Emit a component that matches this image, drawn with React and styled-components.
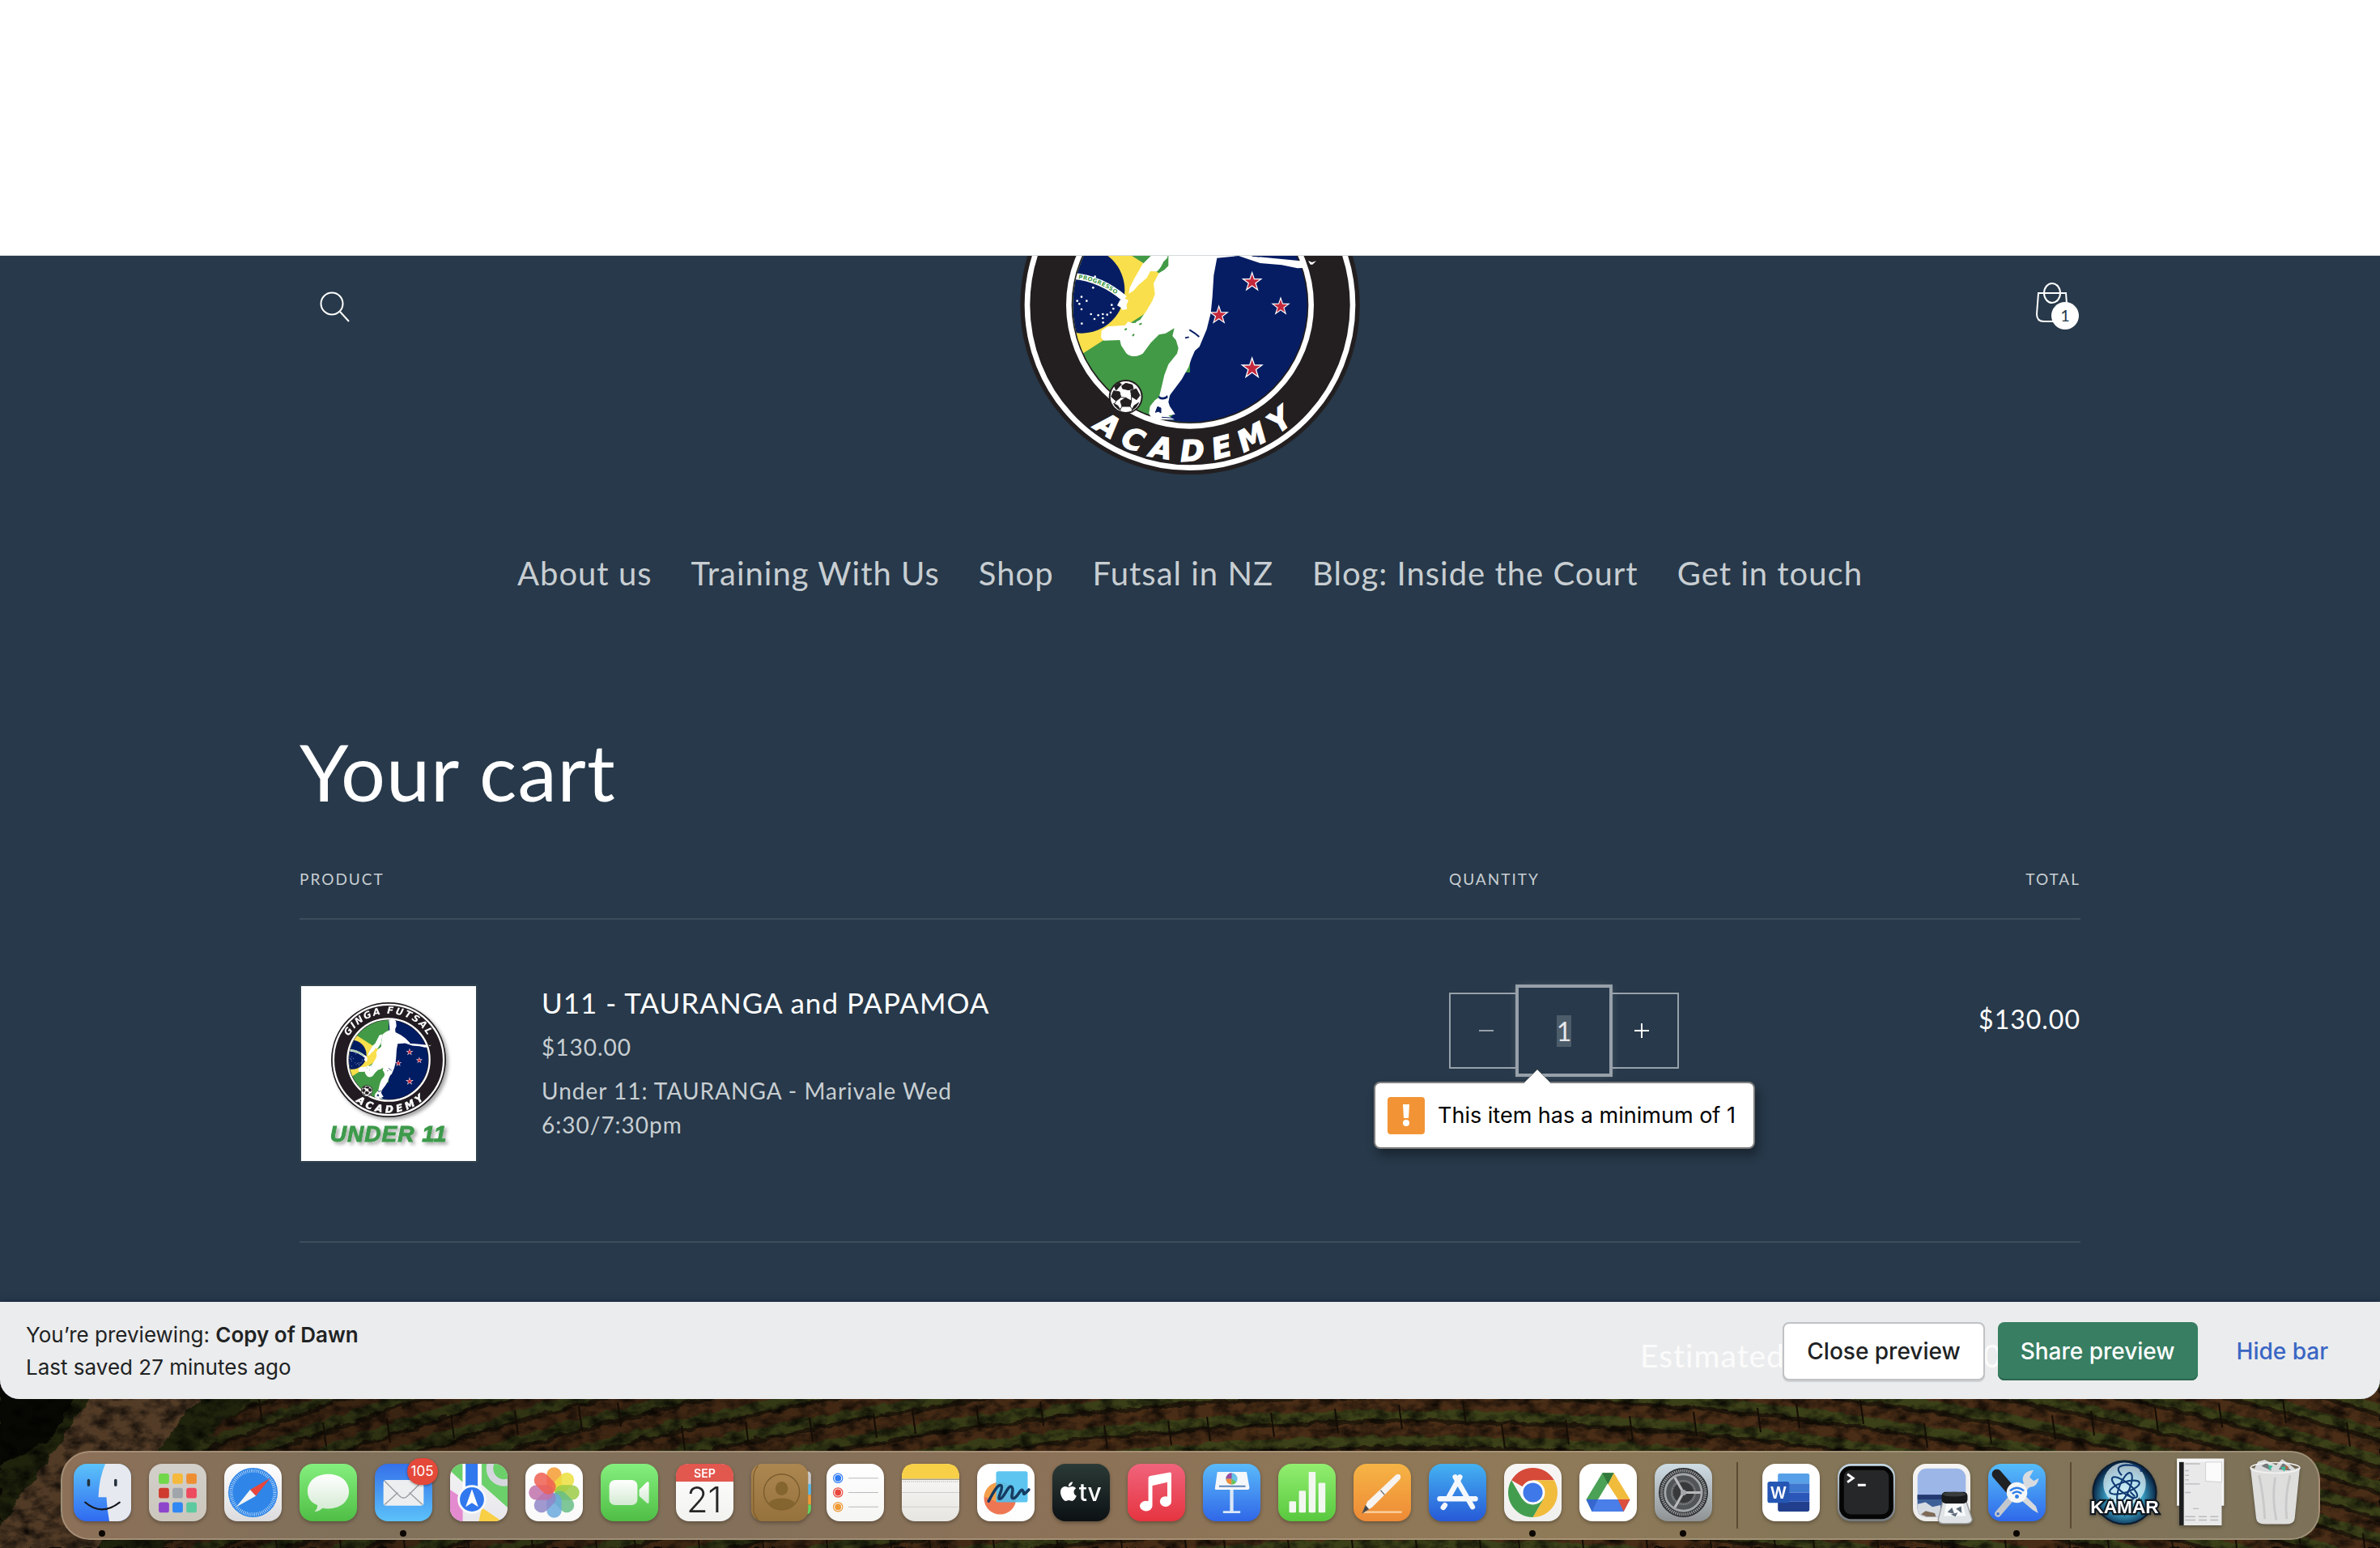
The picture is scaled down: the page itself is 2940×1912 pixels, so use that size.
import { useEffect, useRef } from "react";
import styled, { createGlobalStyle } from "styled-components";
import { FaApple } from "react-icons/fa";

const COLORS = {
  store: "#27394a",
  storeText: "#c8ced2",
  line: "rgba(255, 255, 255, 0.1)",
  control: "#97a1aa",
  bar: "rgba(251, 251, 251, 0.926)",
  ink: "#202223",
  green: "#377e62",
  link: "#3a66c4",
};

const GlobalStyle = createGlobalStyle`
  * {
    box-sizing: border-box;
  }
  body {
    margin: 0;
    background: #1c1208;
  }
  h1, h2, p {
    margin: 0;
    font-weight: 400;
  }
`;

const Desktop = styled.div`
  display: flex;
  flex-direction: column;
  min-height: 100vh;
  background: #150e06;
`;

const BrowserWindow = styled.div`
  position: relative;
  z-index: 1;
  display: flex;
  flex-direction: column;
  flex: 1;
  overflow: hidden;
  border-radius: 0 0 24px 24px;
  background: white;
`;

const BlankArea = styled.div`
  height: 316px;
  flex: none;
  border-bottom: 1px solid #d5dadc;
`;

const Store = styled.main`
  flex: 1;
  background: ${COLORS.store};
  color: white;
  font-family: Lato, "Liberation Sans", sans-serif;
  letter-spacing: 1px;
`;

const PageWidth = styled.div`
  max-width: 2400px;
  margin: 0 auto;
  padding: 0 100px;
`;

const Header = styled.header`
  display: grid;
  grid-template-columns: 1fr auto 1fr;
  align-items: start;
`;

const IconButton = styled.button`
  position: relative;
  display: flex;
  justify-self: ${(props) => props.$side};
  align-items: center;
  justify-content: center;
  width: 88px;
  height: 88px;
  margin: 19px -10px 0 0;
  padding: 0;
  border: 0;
  background: none;
  color: white;
`;

const CartCount = styled.span`
  position: absolute;
  left: 42px;
  top: 38px;
  width: 34px;
  height: 34px;
  border-radius: 50%;
  background: white;
  color: ${COLORS.store};
  font: 20px/32px Lato, sans-serif;
  text-align: center;
`;

const Nav = styled.nav`
  display: flex;
  justify-content: center;
  gap: 48px;
  margin-top: 92px;
  a {
    color: ${COLORS.storeText};
    font-size: 40px;
    line-height: 60px;
    text-decoration: none;
  }
`;

const Title = styled.h1`
  margin-top: 155px;
  font-size: 97px;
  line-height: 120px;
`;

const CartTable = styled.table`
  width: 100%;
  margin-top: 55px;
  border-collapse: separate;
  border-spacing: 0;
  table-layout: fixed;
  th {
    padding: 0 0 30px;
    border-bottom: 2px solid ${COLORS.line};
    color: ${COLORS.storeText};
    font-size: 19px;
    font-weight: 400;
    line-height: 36px;
    letter-spacing: 2px;
    text-align: left;
    text-transform: uppercase;
  }
  td {
    padding: 80px 0 97px;
    border-bottom: 2px solid ${COLORS.line};
    vertical-align: top;
  }
  th:last-child,
  td:last-child {
    text-align: right;
  }
`;

const Thumb = styled.div`
  height: 220px;
  border: 2px solid #31424f;
  background: white;
  svg {
    display: block;
  }
`;

const Details = styled.div`
  max-width: 640px;
  padding-left: 79px;
  color: ${COLORS.storeText};
  font-size: 28px;
  line-height: 42px;
  p {
    margin-top: 12px;
  }
  a {
    display: block;
    color: white;
    font-size: 35px;
    line-height: 44px;
    white-space: nowrap;
    text-decoration: none;
  }
`;

const QuantityWrap = styled.div`
  position: relative;
  width: 284px;
  margin-top: 10px;
`;

const Quantity = styled.div`
  display: flex;
  height: 94px;
  border: 2px solid ${COLORS.control};
  button {
    display: flex;
    align-items: center;
    justify-content: center;
    width: 88px;
    padding: 0;
    border: 0;
    background: none;
    color: white;
  }
  button:disabled {
    color: ${COLORS.control};
  }
  input {
    position: relative;
    flex: 1;
    min-width: 0;
    margin: -4px 0;
    padding: 0;
    border: 0;
    outline: 4px solid ${COLORS.control};
    outline-offset: 4px;
    box-shadow: 0 0 0 4px ${COLORS.store}, 0 0 10px 6px rgba(255, 255, 255, 0.2);
    background: ${COLORS.store};
    color: #e4e7ea;
    font: 32px Lato, sans-serif;
    text-align: center;
    appearance: none;
  }
  input::selection {
    background: #4d5c69;
    color: #e4e7ea;
  }
`;

const Tooltip = styled.div`
  position: absolute;
  top: 110px;
  left: -93px;
  z-index: 2;
  display: flex;
  align-items: center;
  gap: 16px;
  height: 83px;
  padding: 0 22px 0 15px;
  border: 2px solid #7d7d7d;
  border-radius: 8px;
  background: white;
  box-shadow: 4px 8px 12px rgba(0, 0, 0, 0.35);
  color: black;
  font: 27px/40px Inter, sans-serif;
  letter-spacing: 0;
  white-space: nowrap;
`;

const TooltipArrow = styled.svg`
  position: absolute;
  top: -18px;
  left: 182px;
`;

const TotalPrice = styled.div`
  margin-top: 18px;
  font-size: 32px;
  line-height: 50px;
`;

const Estimate = styled.div`
  display: flex;
  justify-content: flex-end;
  gap: 22px;
  margin-top: 112px;
  font-size: 39px;
  line-height: 54px;
  h2 {
    font-size: 39px;
  }
`;

const PreviewBar = styled.footer`
  position: absolute;
  right: 0;
  bottom: 0;
  left: 0;
  z-index: 3;
  display: flex;
  align-items: center;
  justify-content: space-between;
  height: 120px;
  padding: 2px 32px 0;
  background: ${COLORS.bar};
  box-shadow: 0 0 8px rgba(20, 20, 60, 0.6);
  color: ${COLORS.ink};
  font: 26px/40px Inter, sans-serif;
  b {
    font-weight: 600;
  }
`;

const BarActions = styled.div`
  display: flex;
  gap: 16px;
`;

const BarButton = styled.button`
  height: 72px;
  padding: 0 ${(props) => (props.$kind === "plain" ? 32 : 28)}px;
  border: ${(props) => (props.$kind === "outline" ? "2px solid #bfc2c5" : "0")};
  border-radius: 8px;
  background: ${(props) =>
    ({ outline: "white", primary: COLORS.green, plain: "none" })[props.$kind]};
  box-shadow: ${(props) =>
    ({
      outline: "0 2px 1px rgba(0, 0, 0, 0.12)",
      primary: "inset 0 -2px 0 #2b664f",
      plain: "none",
    })[props.$kind]};
  color: ${(props) =>
    ({ outline: COLORS.ink, primary: "white", plain: COLORS.link })[props.$kind]};
  font: 500 28px/40px Inter, sans-serif;
`;

const DockArea = styled.div`
  position: relative;
  display: flex;
  flex: none;
  justify-content: center;
  align-items: flex-start;
  height: 184px;
  padding-top: 64px;
`;

const Wallpaper = styled.svg`
  position: absolute;
  right: 0;
  bottom: 0;
  width: 100%;
  height: 212px;
`;

const Dock = styled.div`
  position: relative;
  display: flex;
  height: 110px;
  padding: 0 7px 0 3px;
  border: 2px solid rgba(225, 210, 185, 0.3);
  border-radius: 36px;
  background: linear-gradient(90deg, #8d7058, #80705a 12%, #84705a 30%, #8c7257 45%, #8f7a58 66%, #847558 78%, #7d7259);
`;

const DockItem = styled.div`
  position: relative;
  width: 93px;
  display: flex;
  flex-direction: column;
  align-items: center;
  padding-top: 14px;
  > svg {
    overflow: visible;
    filter: drop-shadow(0 2px 2px rgba(0, 0, 0, 0.3));
  }
`;

const RunningDot = styled.span`
  width: 8px;
  height: 8px;
  margin-top: 11px;
  border-radius: 50%;
  background: #0b0500;
`;

const DockBadge = styled.span`
  position: absolute;
  top: 7px;
  left: 51px;
  width: 38px;
  height: 33px;
  border-radius: 17px;
  background: #e5493a;
  box-shadow: 0 1px 3px rgba(0, 0, 0, 0.4);
  color: white;
  font: 17px/33px Inter, sans-serif;
  text-align: center;
`;

const DockDivider = styled.span`
  width: 2px;
  height: 82px;
  margin: 12px 19px 0;
  background: #5c4a32;
`;

const starPoints = (cx, cy, r) =>
  Array.from({ length: 10 }, (_, i) => {
    const radius = i % 2 ? r * 0.39 : r;
    const a = (i * Math.PI) / 5 - Math.PI / 2;
    return `${(cx + radius * Math.cos(a)).toFixed(1)},${(cy + radius * Math.sin(a)).toFixed(1)}`;
  }).join(" ");

const NZ_STARS = [
  [950, 145, 41],
  [827, 268, 39],
  [1056, 236, 37],
  [950, 465, 45],
];

const BRAZIL_STARS = [
  [318, 200], [302, 215], [337, 215], [310, 226], [318, 246], [368, 125], [361, 166],
  [353, 264], [380, 268], [397, 264], [413, 266], [426, 258], [436, 244], [430, 230],
  [366, 282], [397, 279], [398, 295], [319, 299],
];

// full adds the club name round the top, which the scrolled header never shows
const ClubBadge = ({ id, full, ...props }) => (
  <svg {...props} role="img" aria-label="Ginga Futsal Academy">
    <defs>
      <clipPath id={`${id}-face`}>
        <circle cx="720" cy="230" r="434" />
      </clipPath>
      <path id={`${id}-bottom`} d="M142 230A578 578 0 0 0 1298 230" />
      <path id={`${id}-top`} d="M214 230A506 506 0 0 1 1226 230" />
      <path id={`${id}-band`} d="M306 133Q390 142 466 207" />
    </defs>
    <circle cx="720" cy="230" r="629" fill="#231f20" />
    <circle cx="720" cy="230" r="603" fill="none" stroke="white" strokeWidth="20" />
    <circle cx="720" cy="230" r="449" fill="none" stroke="white" strokeWidth="20" />
    <g clipPath={`url(#${id}-face)`}>
      <rect x="280" y="-210" width="450" height="890" fill="#439a46" />
      <rect x="720" y="-210" width="450" height="890" fill="#061d63" />
      <path d="M680 480L636 590L655 640L600 680H740V480z" fill="#061d63" />
      <path d="M696 170L320 412L-56 170L320 -70z" fill="#f9df4b" />
      <circle cx="318" cy="175" r="160" fill="#061d63" />
      <path d="M280 122Q390 130 478 207" fill="none" stroke="white" strokeWidth="24" />
      <text fill="#439a46" fontFamily="DejaVu Sans" fontWeight="700" fontSize="21">
        <textPath href={`#${id}-band`}>PROGRESSO</textPath>
      </text>
      {BRAZIL_STARS.map(([x, y]) => (
        <circle key={`${x}-${y}`} cx={x} cy={y} r="4" fill="white" />
      ))}
      {NZ_STARS.map(([x, y, r]) => (
        <g key={`${x}-${y}`}>
          <polygon points={starPoints(x, y, r)} fill="white" />
          <polygon points={starPoints(x, y, r * 0.72)} fill="#c5283d" />
        </g>
      ))}
    </g>
    <g fill="white">
      <path d="M722-205Q765-225 800-195L806-140L792-105L796-72L856-40L905-4L960 50L1060 60L1145 68L1152 92L1118 94L1060 82L980 75L935 60L900 48L820 56L808 120L803 200L797 260L782 320L755 385L738 400L725 430L715 460L690 505L645 565L640 590L645 605L665 635L640 640L662 655H600L575 645L568 632L572 605L590 583L605 572L612 545L625 490L640 450L672 410L677 390L668 360L655 345L662 316L630 335L605 340L575 370L545 410Q510 430 485 410L465 380L460 360L400 362L390 350L392 325L415 310L480 305L490 292L510 298L535 285L560 250L580 215L590 190L585 150L605 112L625 100L640 85L640 48L655-50L690-75L732-95L730-130z" />
      <path d="M575 48L620-40L655-50L637 48L635 65L598 106L573 105L560 130L530 155L510 178L493 188L497 165L515 130L545 78z" />
      <path d="M450 232L460 212L478 206L492 212L485 230L487 245L470 249L464 240z" />
      <path d="M1158 66L1172 72L1188 67L1174 80H1166z" />
    </g>
    <path d="M640 52L634 82L600 112L622 70z" fill="#439a46" />
    <path d="M718 322Q740 335 754 348" stroke="#061d63" strokeWidth="6" fill="none" />
    <path d="M702 352L716 349M950 48L978 50" stroke="#061d63" strokeWidth="5" />
    <path d="M478 322L486 318M507 345L513 338M515 296L519 290M532 303L541 298" stroke="#439a46" strokeWidth="6" />
    <path d="M604 566Q622 580 636 564L638 574Q620 586 604 576z" fill="#061d63" />
    <path d="M592 628L600 607L612 612V630L603 624zM615 646L660 649" fill="#061d63" stroke="#061d63" strokeWidth="3" />
    <circle cx="482" cy="570" r="63" fill="#231f20" />
    <circle cx="482" cy="570" r="57" fill="white" />
    <g fill="#231f20" stroke="#231f20" strokeWidth="3">
      <path d="M482 574L503 586L498 606H468L462 586z" />
      <path d="M437 548L459 552L464 572L446 586L428 570z" />
      <path d="M500 547L521 541L534 565L522 581L503 569z" />
      <path d="M467 530L482 520L506 526L510 540L492 545L470 540z" />
      <path d="M440 531L458 518L466 524L446 546zM437 595L452 603L463 620Q444 612 437 595zM513 603L530 592Q522 612 504 620z" />
      <path d="M446 586L440 596M468 606L462 616M498 606L506 616M503 586L503 569M464 572L482 574" />
    </g>
    <g fill="white" fontFamily="DejaVu Sans" fontWeight="700" fontStyle="italic" textAnchor="middle">
      <text fontSize="108" letterSpacing="36" stroke="white" strokeWidth="4">
        <textPath href={`#${id}-bottom`} startOffset="52%">ACADEMY</textPath>
      </text>
      {full && (
        <text fontSize="104" letterSpacing="16">
          <textPath href={`#${id}-top`} startOffset="50%">GINGA FUTSAL</textPath>
        </text>
      )}
    </g>
  </svg>
);

const AppTile = ({ id, from, to, children }) => (
  <svg width="71" height="71" viewBox="0 0 100 100" aria-hidden="true">
    <defs>
      <linearGradient id={`${id}-fill`} x2="0" y2="1">
        <stop stopColor={from} />
        <stop offset="1" stopColor={to} />
      </linearGradient>
      <linearGradient id={`${id}-shine`} x2="0" y2="1">
        <stop stopColor="#ffffff" />
        <stop offset="1" stopColor="#d3ead2" />
      </linearGradient>
      <clipPath id={`${id}-clip`}>
        <rect width="100" height="100" rx="23" />
      </clipPath>
    </defs>
    <rect width="100" height="100" rx="23" fill={`url(#${id}-fill)`} />
    {children}
  </svg>
);

const Finder = () => (
  <AppTile id="finder" from="#5cc3fa" to="#2f6af0">
    <g clipPath="url(#finder-clip)">
      <path d="M55 0H100V100H62Q58 78 57 58H43Q44 26 55 0z" fill="#e6e9f0" />
      <path d="M26 29V37M73 29V37" stroke="#24303c" strokeWidth="5" strokeLinecap="round" />
      <path d="M20 67Q48 92 80 67" fill="none" stroke="#15181c" strokeWidth="3" strokeLinecap="round" />
    </g>
  </AppTile>
);

const LAUNCH_COLORS = [
  "#72d84b", "#f5b93b", "#ee8e33", "#cf3a2e", "#9fa5aa", "#ee4a5f", "#8f44cc", "#3187f3", "#5cc9a0",
];

const Launchpad = () => (
  <AppTile id="launchpad" from="#d3cfca" to="#cbc7bd">
    {LAUNCH_COLORS.map((color, i) => (
      <rect
        key={color}
        x={17 + (i % 3) * 24}
        y={17 + Math.floor(i / 3) * 25}
        width="18"
        height="18"
        rx="4"
        fill={color}
      />
    ))}
  </AppTile>
);

const Safari = () => (
  <AppTile id="safari" from="#ffffff" to="#dcdcde">
    <circle cx="50" cy="50" r="43" fill="#2f86e8" />
    <circle cx="50" cy="50" r="38" fill="none" stroke="#d4e6fb" strokeWidth="6" strokeDasharray="1 2.3" />
    <path d="M80 25L55 56L45 45z" fill="#e8463c" />
    <path d="M21 75L55 56L45 45z" fill="#f2f4f6" />
  </AppTile>
);

const Messages = () => (
  <AppTile id="messages" from="#85ef7e" to="#4fbe45">
    <path d="M50 18C72 18 86 31 86 48S72 78 50 78Q45 78 40 77Q34 83 26 83Q32 78 31 72C20 68 14 59 14 48C14 31 28 18 50 18z" fill="url(#messages-shine)" />
  </AppTile>
);

const Mail = () => (
  <AppTile id="mail" from="#3470ea" to="#5cc2fa">
    <rect x="15" y="28" width="70" height="45" rx="5" fill="#eceef0" />
    <path d="M17 71L40 50M83 71L60 50M17 30L43 56Q50 63 57 56L83 30" fill="none" stroke="#999da1" strokeWidth="2" />
  </AppTile>
);

const Maps = () => (
  <AppTile id="maps" from="#f3f3f5" to="#e8e8ec">
    <g clipPath="url(#maps-clip)">
      <path d="M0 0H22V32L0 12zM55 0H100V76L55 36z" fill="#6bd06a" />
      <circle cx="94" cy="8" r="25" fill="none" stroke="#d5d7de" strokeWidth="12" />
      <path d="M0 45L22 60V100H0z" fill="#e48bd0" />
      <path d="M55 76L90 100H50z" fill="#f8cf45" />
      <path d="M27 0H48V50H27z" fill="#3178ef" />
      <path d="M24 0V45M51 0V40" stroke="white" strokeWidth="4" />
      <circle cx="38" cy="62" r="25" fill="#f7f8fa" />
      <circle cx="38" cy="62" r="21" fill="#3178ef" />
      <path d="M38 44L49 75L38 68L27 75z" fill="white" />
    </g>
  </AppTile>
);

const PETALS = ["#f59c31", "#ebdf3d", "#9ccb45", "#68bd86", "#6ca9dd", "#8f87c8", "#c072ab", "#ef5f51"];

const Photos = () => (
  <AppTile id="photos" from="#ffffff" to="#f9f9f9">
    {PETALS.map((color, i) => (
      <rect key={color} x="37" y="6" width="26" height="43" rx="13" fill={color} fillOpacity="0.85" transform={`rotate(${i * 45} 50 50)`} />
    ))}
  </AppTile>
);

const FaceTime = () => (
  <AppTile id="facetime" from="#85ef7e" to="#4fbe45">
    <rect x="15" y="28" width="49" height="44" rx="10" fill="url(#facetime-shine)" />
    <path d="M67 45L80 32Q84 30 84 34V66Q84 71 80 68L67 56z" fill="url(#facetime-shine)" />
  </AppTile>
);

const Calendar = () => (
  <AppTile id="calendar" from="#ffffff" to="#f2f2ef">
    <path d="M0 31V23Q0 0 23 0H77Q100 0 100 23V31z" fill="#e2574e" />
    <text x="50" y="24" fill="white" fontFamily="Inter" fontWeight="600" fontSize="20" textAnchor="middle">SEP</text>
    <text x="49" y="85" fill="#262626" fontFamily="Inter" fontWeight="300" fontSize="61" textAnchor="middle">21</text>
  </AppTile>
);

const Contacts = () => (
  <AppTile id="contacts" from="#ad8750" to="#95713c">
    <path d="M98 13Q104 14 104 20V36H96z" fill="#c9c9c9" />
    <path d="M96 35H104V54H96z" fill="#58b8ea" />
    <path d="M96 54H104V71H96z" fill="#f39a34" />
    <path d="M96 71H104V78Q104 87 96 88z" fill="#5fd45f" />
    <rect width="99" height="100" rx="20" fill="url(#contacts-fill)" />
    <path d="M12 3Q4 12 4 24V76Q4 90 12 97" stroke="#80602f" strokeWidth="2" fill="none" />
    <circle cx="53" cy="49" r="31" fill="none" stroke="#7b5c2e" strokeWidth="2" />
    <ellipse cx="53" cy="43" rx="11" ry="12" fill="#84642f" />
    <path d="M29 69Q38 60 53 60T77 69Q68 80 53 80T29 69z" fill="#84642f" />
  </AppTile>
);

const Reminders = () => (
  <AppTile id="reminders" from="#ffffff" to="#f5f5f3">
    {["#2f7cf6", "#e9453a", "#ee9a35"].map((color, i) => (
      <g key={color}>
        <circle cx="20" cy={25 + i * 25} r="8" fill="none" stroke={color} strokeWidth="1.6" />
        <circle cx="20" cy={25 + i * 25} r="5.5" fill={color} />
        <path d={`M38 ${25 + i * 25}H90`} stroke="#b9babb" strokeWidth="1.6" />
      </g>
    ))}
  </AppTile>
);

const Notes = () => (
  <AppTile id="notes" from="#fbfbfa" to="#e6e5e1">
    <path d="M0 26V23Q0 0 23 0H77Q100 0 100 23V26z" fill="#f8d048" />
    <path d="M0 27H100" stroke="#a9a189" strokeWidth="2" />
    <path d="M2 31H98" stroke="#bcbcb9" strokeWidth="2" strokeDasharray="1.5 2" />
    <path d="M0 50H100M0 75H100" stroke="#cfceca" strokeWidth="1.5" />
  </AppTile>
);

const Freeform = () => (
  <AppTile id="freeform" from="#ffffff" to="#fdfdfd">
    <circle cx="40" cy="60" r="28" fill="#ef7652" />
    <path d="M12 57A28 28 0 0 1 66 50L34 66z" fill="#f3a04a" />
    <rect x="33" y="13" width="55" height="54" rx="4" fill="#4cbff0" fillOpacity="0.9" />
    <path d="M20 65C29 48 37 34 42 38S33 62 40 61S54 36 60 40S56 60 63 60S75 43 79 46S77 59 90 45" fill="none" stroke="#163b62" strokeWidth="5" strokeLinecap="round" />
  </AppTile>
);

const AppleTv = () => (
  <AppTile id="tv" from="#2b3a36" to="#0c1114">
    <FaApple x="9" y="29" size="38" color="white" />
    <text x="46" y="65" fill="white" fontFamily="Inter" fontWeight="500" fontSize="42">tv</text>
  </AppTile>
);

const Music = () => (
  <AppTile id="music" from="#f0647c" to="#e63440">
    <path d="M36 25Q36 22 39 21L72 15Q76 14 76 18V65A10 9 0 1 1 69 57V32L43 38V73A11 9 0 1 1 36 65z" fill="white" />
  </AppTile>
);

const Keynote = () => (
  <AppTile id="keynote" from="#5abafa" to="#3067e8">
    <path d="M47 45H53V82H65V86H35V82H47z" fill="#dce8f7" />
    <path d="M25 14H76L81 42Q81 45 78 45H23Q20 45 21 42z" fill="#f5f7fa" />
    <path d="M28 39H74" stroke="#5b85b8" strokeWidth="3" />
    <circle cx="50" cy="26" r="10" fill="#68c2e7" />
    <path d="M50 26V16A10 10 0 0 0 40 26z" fill="#9c4ba0" />
    <path d="M50 26H40A10 10 0 0 0 50 36z" fill="#f28b3a" />
    <path d="M50 26V36A10 10 0 0 0 58 32z" fill="#6bc355" />
  </AppTile>
);

const Numbers = () => (
  <AppTile id="numbers" from="#92ee70" to="#58c83e">
    {[20, 38, 71, 52].map((h, i) => (
      <rect key={h} x={19 + i * 17} y={85 - h} width="12" height={h} rx="2" fill="#f2f8f0" />
    ))}
  </AppTile>
);

const Pages = () => (
  <AppTile id="pages" from="#f6b445" to="#ee8a36">
    <path d="M17 84H84" stroke="#fbd5a6" strokeWidth="3" />
    <path d="M16 85L24 66L74 19Q80 16 82 21Q83 25 79 29L32 76z" fill="#f6f3f1" />
    <path d="M47 46L54 54M16 85L21 73L26 79z" stroke="#555" fill="#444" strokeWidth="1.5" />
  </AppTile>
);

const AppStore = () => (
  <AppTile id="appstore" from="#44b2f2" to="#2759d7">
    <g stroke="#f4f8fd" strokeWidth="9" strokeLinecap="round">
      <path d="M54 23L33 61H19M33 61H81M46 23L76 75M28 72L25 76" fill="none" />
    </g>
  </AppTile>
);

const Chrome = () => (
  <AppTile id="chrome" from="#f8f6f5" to="#efefee">
    <path d="M50 50L12.8 28.5A43 43 0 0 1 87.2 28.5H50z" fill="#d64a3a" />
    <path d="M50 28.5H87.2A43 43 0 0 1 50 93L68.6 60.8z" fill="#f1bb3c" />
    <path d="M31.4 60.8L12.8 28.5A43 43 0 0 0 50 93L68.6 60.8z" fill="#439d4f" />
    <circle cx="50" cy="50" r="21" fill="white" />
    <circle cx="50" cy="50" r="17" fill="#3f78e8" />
  </AppTile>
);

const Drive = () => (
  <AppTile id="drive" from="#ffffff" to="#ffffff">
    <path d="M40 16H60L32 63L22 83L12 62z" fill="#4ba155" />
    <path d="M40 16H60L50 36z" fill="#31793b" />
    <path d="M60 16L88 62H67L50 36z" fill="#f1bb3c" />
    <path d="M12 62H88L77 83H22z" fill="#4a7ee8" />
    <path d="M67 62H88L77 83z" fill="#dd4f3e" />
    <path d="M12 62H32L22 83z" fill="#3567cf" />
    <path d="M50 36L67 62H33z" fill="white" />
  </AppTile>
);

const Settings = () => (
  <AppTile id="settings" from="#cfdde5" to="#8f9294">
    <circle cx="50" cy="50" r="43" fill="#2f3133" />
    <circle cx="50" cy="50" r="38" fill="none" stroke="#9b9ea0" strokeWidth="5" strokeDasharray="2 1.6" />
    <circle cx="50" cy="50" r="32" fill="#525557" stroke="#a4a7a9" strokeWidth="4" />
    <circle cx="50" cy="50" r="20" fill="#37393b" stroke="#7e8183" strokeWidth="4" strokeDasharray="2 1" />
    <path d="M50 50H80M50 50L35 24M50 50L35 76" stroke="#b8babc" strokeWidth="4.5" />
    <circle cx="50" cy="50" r="5" fill="#a4a7a9" />
  </AppTile>
);

const Word = () => (
  <AppTile id="word" from="#ffffff" to="#ffffff">
    <path d="M27 34V20Q27 17 30 17H79Q82 17 82 20V34z" fill="#57a0e8" />
    <path d="M27 34H82V50H27z" fill="#3f79cf" />
    <path d="M27 50H82V66H27z" fill="#2b57b8" />
    <path d="M27 66H82V80Q82 83 79 83H30Q27 83 27 80z" fill="#213f8c" />
    <rect x="9" y="31" width="38" height="37" rx="4" fill="#2556b4" />
    <text x="28" y="60" fill="white" fontFamily="Inter" fontWeight="600" fontSize="28" textAnchor="middle">W</text>
  </AppTile>
);

const Terminal = () => (
  <AppTile id="terminal" from="#c5d9e6" to="#74787b">
    <rect x="3" y="4" width="94" height="92" rx="20" fill="#050505" />
    <rect x="11" y="11" width="78" height="77" rx="12" fill="#262728" />
    <path d="M17 18L27 25L17 32M35 37H49" fill="none" stroke="white" strokeWidth="4" />
  </AppTile>
);

const PreviewApp = () => (
  <AppTile id="preview" from="#f6f4f2" to="#ecebe9">
    <rect x="8" y="8" width="84" height="84" rx="16" fill="#9cb6e8" />
    <path d="M8 54H92V76Q92 92 76 92H24Q8 92 8 76z" fill="#3d5f97" />
    <path d="M8 54H92V62H8z" fill="#23396f" />
    <path d="M8 70L22 67L34 75L48 72V92H24Q8 92 8 76z" fill="#d6dbe2" />
    <path d="M14 88L22 82L38 86L40 92H24z" fill="#7f6a55" />
    <path d="M52 66H93L103 97Q102 104 92 104H54Q45 104 44 97z" fill="#dfe3e6" stroke="#999c9f" strokeWidth="2" />
    <path d="M58 70H87L92 91H54z" fill="#f7f9fa" />
    <path d="M60 84L68 76L72 87zM75 78L84 74L85 86zM66 88L78 85L74 92z" fill="#5e6c7b" />
    <rect x="50" y="49" width="45" height="20" rx="7" fill="#18191a" />
    <ellipse cx="72" cy="53" rx="20" ry="4" fill="#393b3c" />
  </AppTile>
);

const Wireless = () => (
  <AppTile id="wireless" from="#55bdfa" to="#2f68ea">
    <path d="M40 60L17 87" stroke="#c3c8cd" strokeWidth="11" strokeLinecap="round" />
    <path d="M45 62L76 27" stroke="#d7dbdf" strokeWidth="12" />
    <path d="M79 11Q61 13 60 27Q61 38 72 41Q86 40 88 25L79 30L71 25z" fill="#d7dbdf" />
    <path d="M15 18L41 48" stroke="#1f2123" strokeWidth="17" strokeLinecap="round" />
    <path d="M56 62L77 80L87 86L83 74L65 56z" fill="#d6d9dc" />
    <circle cx="50" cy="50" r="18" fill="#f5f6f7" />
    <path d="M38 47Q50 37 62 47M42 52Q50 45 58 52" fill="none" stroke="#2e7ee8" strokeWidth="3.5" />
    <circle cx="50" cy="57" r="3.5" fill="#2e7ee8" />
    <circle cx="17" cy="87" r="2.5" fill="#3a6ccf" />
  </AppTile>
);

const Kamar = () => (
  <svg width="71" height="71" viewBox="0 0 100 100" aria-hidden="true">
    <defs>
      <radialGradient id="kamar-fill" cy="0.55">
        <stop stopColor="#b7f1f9" />
        <stop offset="0.55" stopColor="#3aa3c9" />
        <stop offset="1" stopColor="#0a2747" />
      </radialGradient>
    </defs>
    <circle cx="50" cy="50" r="55" fill="url(#kamar-fill)" stroke="#0b1c30" strokeWidth="3" />
    <circle cx="50" cy="35" r="37" fill="#e5f5fa" fillOpacity="0.7" />
    <g fill="none" stroke="#113b74" strokeWidth="3">
      <ellipse cx="50" cy="41" rx="27" ry="9" transform="rotate(-18 50 41)" />
      <ellipse cx="50" cy="41" rx="27" ry="9" transform="rotate(38 50 41)" />
      <ellipse cx="50" cy="41" rx="27" ry="9" transform="rotate(-68 50 41)" />
      <path d="M45 20Q30 4 53 2Q78 2 79 14M55 52L66 62M60 49L68 57" />
    </g>
    <text x="50" y="86" fill="white" stroke="#101820" strokeWidth="6" paintOrder="stroke" fontFamily="Liberation Sans" fontWeight="700" fontSize="32" textAnchor="middle">KAMAR</text>
  </svg>
);

const DocStack = () => (
  <svg width="71" height="71" viewBox="0 0 100 100" aria-hidden="true">
    <path d="M10-9H92V73H10z" fill="#f6f6f6" />
    <path d="M14-3H88V107H14z" fill="#e9e9ea" />
    <path d="M14-3H22V107H14z" fill="#1c1d1e" />
    <path d="M60-3H88V32L60 30z" fill="#fbfbfb" stroke="#c3c3c3" />
    <path d="M24 0H50M24 12H31M24 20H31M24 28H31M24 50H34M24 35H50M38 78H48M24 92H42M48 92H62M68 92H82M24 98H42M48 98H62M68 98H82" stroke="#b9bbbd" strokeWidth="2" />
  </svg>
);

const Trash = () => (
  <svg width="71" height="71" viewBox="0 0 100 100" aria-hidden="true">
    <path d="M14 8L20-4L32-7L42-2L52 2L62-8L74 0L86 10L74 18H26z" fill="#d9dadb" />
    <path d="M26 4L36-2L44 12zM56 10L64-2L78 12z" fill="#75787b" />
    <path d="M38 2L46 4L40 12zM60 6L68 5L66 14z" fill="#3cbf9c" />
    <path d="M68 2L74 6L69 11z" fill="#b06a3e" />
    <path d="M7 6Q50 24 93 6L84 95Q83 105 68 105H34Q18 105 17 95z" fill="#dededd" />
    <path d="M22 20Q30 55 32 96M50 24Q44 60 52 98M76 20Q66 60 70 96" stroke="#c9c9c9" strokeWidth="4" fill="none" />
    <ellipse cx="50" cy="7" rx="43" ry="9" fill="none" stroke="#f4f4f4" strokeWidth="2" />
  </svg>
);

const DOCK = [
  { name: "Finder", Icon: Finder, running: true },
  { name: "Launchpad", Icon: Launchpad },
  { name: "Safari", Icon: Safari },
  { name: "Messages", Icon: Messages },
  { name: "Mail", Icon: Mail, running: true, badge: "105" },
  { name: "Maps", Icon: Maps },
  { name: "Photos", Icon: Photos },
  { name: "FaceTime", Icon: FaceTime },
  { name: "Calendar", Icon: Calendar },
  { name: "Contacts", Icon: Contacts },
  { name: "Reminders", Icon: Reminders },
  { name: "Notes", Icon: Notes },
  { name: "Freeform", Icon: Freeform },
  { name: "TV", Icon: AppleTv },
  { name: "Music", Icon: Music },
  { name: "Keynote", Icon: Keynote },
  { name: "Numbers", Icon: Numbers },
  { name: "Pages", Icon: Pages },
  { name: "App Store", Icon: AppStore },
  { name: "Chrome", Icon: Chrome, running: true },
  { name: "Drive", Icon: Drive },
  { name: "System Settings", Icon: Settings, running: true },
  { name: "divider-apps" },
  { name: "Word", Icon: Word },
  { name: "Terminal", Icon: Terminal },
  { name: "Preview", Icon: PreviewApp },
  { name: "Wireless Diagnostics", Icon: Wireless, running: true },
  { name: "divider-files" },
  { name: "Kamar", Icon: Kamar },
  { name: "Documents", Icon: DocStack },
  { name: "Trash", Icon: Trash },
];

// height of a vine row at x; the hill peaks a little right of the middle
const rowY = (base, x) => base + 0.00013 * (x - 1750) ** 2;

const rowPath = (base) =>
  Array.from({ length: 31 }, (_, i) => {
    const x = i * 100;
    return `${i ? "L" : "M"}${x} ${rowY(base, x).toFixed(1)}`;
  }).join("");

const ROWS = Array.from({ length: 20 }, (_, i) => -400 + i * 32);
const POSTS = Array.from({ length: 36 }, (_, i) => 320 + i * 73 + ((i * 37) % 31));

const Vineyard = () => (
  <Wallpaper viewBox="0 0 2940 212" preserveAspectRatio="none" aria-hidden="true">
    <defs>
      <filter id="rough" x="0" y="0" width="100%" height="100%" colorInterpolationFilters="sRGB">
        <feTurbulence type="fractalNoise" baseFrequency="0.05 0.08" numOctaves="4" seed="4" result="noise" />
        <feDisplacementMap in="SourceGraphic" in2="noise" scale="9" result="moved" />
        <feColorMatrix in="noise" values="0 0 0 0 0  0 0 0 0 0  0 0 0 0 0  1.6 0 0 0 -0.6" result="shade" />
        <feComposite in="shade" in2="moved" operator="over" />
      </filter>
      <linearGradient id="dusk">
        <stop stopColor="#000000" stopOpacity="0.35" />
        <stop offset="0.2" stopColor="#000000" stopOpacity="0.3" />
        <stop offset="0.5" stopColor="#000000" stopOpacity="0.12" />
        <stop offset="1" stopColor="#000000" stopOpacity="0.12" />
      </linearGradient>
    </defs>
    <g filter="url(#rough)">
      <rect width="2940" height="212" fill="#533319" />
      {ROWS.map((base) => (
        <g key={base} fill="none">
          <path d={rowPath(base)} stroke="#43491b" strokeWidth="13" />
          <path d={rowPath(base + 8)} stroke="#281d0d" strokeWidth="5" />
        </g>
      ))}
      <path d="M0 0H340L240 90L200 212H0z" fill="#2f3512" />
      <path d="M130 0H270L210 70L120 212H-20L40 130z" fill="#7d5a3a" />
      <path d="M0 0H110L60 80L0 110z" fill="#0b0c04" />
    </g>
    <rect width="2940" height="212" fill="url(#dusk)" />
    <g stroke="#140d06" strokeWidth="2">
      {POSTS.map((x, i) => (
        <path key={x} d={`M${x} ${28 + ((i * 29) % 34)}l4 30M${x + 20} 194l2 18`} />
      ))}
    </g>
  </Wallpaper>
);

const QuantityInput = () => {
  const ref = useRef(null);
  useEffect(() => {
    ref.current.focus();
    ref.current.select();
  }, []);
  return (
    <QuantityWrap>
      <Quantity>
        <button type="button" aria-label="Decrease quantity" disabled>
          <svg width="20" height="20">
            <path d="M1 10H19" stroke="currentColor" strokeWidth="2" />
          </svg>
        </button>
        <input ref={ref} aria-label="Quantity" inputMode="numeric" defaultValue="1" />
        <button type="button" aria-label="Increase quantity">
          <svg width="20" height="20">
            <path d="M1 10H19M10 1V19" stroke="currentColor" strokeWidth="2" />
          </svg>
        </button>
      </Quantity>
      <Tooltip role="alert">
        <TooltipArrow width="36" height="18" aria-hidden="true">
          <path d="M1 18L18 1L35 18" fill="white" stroke="#7d7d7d" strokeWidth="1" />
        </TooltipArrow>
        <svg width="46" height="46" aria-hidden="true">
          <rect width="46" height="46" rx="4" fill="#f29435" />
          <path d="M19 9H27L26 26H20z" fill="white" />
          <circle cx="23" cy="32" r="4" fill="white" />
        </svg>
        This item has a minimum of 1
      </Tooltip>
    </QuantityWrap>
  );
};

const NAV_LINKS = [
  "About us",
  "Training With Us",
  "Shop",
  "Futsal in NZ",
  "Blog: Inside the Court",
  "Get in touch",
];

const Cart = () => (
  <>
    <Title>Your cart</Title>
    <CartTable>
      <colgroup>
        <col width="220" />
        <col />
        <col width="520" />
        <col width="260" />
      </colgroup>
      <thead>
        <tr>
          <th colSpan="2">Product</th>
          <th>Quantity</th>
          <th>Total</th>
        </tr>
      </thead>
      <tbody>
        <tr>
          <td>
            <Thumb>
              <svg width="216" height="216" aria-hidden="true">
                <defs>
                  <filter id="thumb-shadow">
                    <feDropShadow dx="3" dy="3" stdDeviation="2" floodOpacity="0.35" />
                  </filter>
                </defs>
                <g filter="url(#thumb-shadow)">
                  <ClubBadge id="thumb" full x="37" y="20" width="142" height="142" viewBox="91 -399 1258 1258" />
                  <text x="108" y="192" fill="#3c9a4b" stroke="#3c9a4b" fontFamily="Liberation Sans" fontWeight="700" fontStyle="italic" fontSize="28" textAnchor="middle">
                    UNDER 11
                  </text>
                </g>
              </svg>
            </Thumb>
          </td>
          <td>
            <Details>
              <a href="#product">U11 - TAURANGA and PAPAMOA</a>
              <p>$130.00</p>
              <p>Under 11: TAURANGA - Marivale Wed 6:30/7:30pm</p>
            </Details>
          </td>
          <td>
            <QuantityInput />
          </td>
          <td>
            <TotalPrice>$130.00</TotalPrice>
          </td>
        </tr>
      </tbody>
    </CartTable>
    <Estimate>
      <h2>Estimated total</h2>
      <span>$130.00 NZD</span>
    </Estimate>
  </>
);

const App = () => {
  return (
    <Desktop>
      <GlobalStyle />
      <BrowserWindow>
        <BlankArea />
        <Store>
          <PageWidth>
            <Header>
              <IconButton type="button" $side="start" aria-label="Search">
                <svg width="44" height="44" fill="none" stroke="currentColor" strokeWidth="2">
                  <circle cx="18" cy="18" r="13.5" />
                  <path d="M28 28L39 40" />
                </svg>
              </IconButton>
              <ClubBadge id="header" width="420" height="270" viewBox="90 48 1260 810" />
              <IconButton type="button" $side="end" aria-label="Cart">
                <svg width="88" height="88" fill="none" stroke="currentColor" strokeWidth="2">
                  <ellipse cx="43" cy="27" rx="10" ry="12" />
                  <path d="M26 27H60L62 53q0 9-9 9H33q-9 0-9-9z" />
                </svg>
                <CartCount>1</CartCount>
              </IconButton>
            </Header>
            <Nav>
              {NAV_LINKS.map((label) => (
                <a key={label} href="#nav">
                  {label}
                </a>
              ))}
            </Nav>
            <Cart />
          </PageWidth>
        </Store>
        <PreviewBar>
          <div>
            <p>
              You’re previewing: <b>Copy of Dawn</b>
            </p>
            <p>Last saved 27 minutes ago</p>
          </div>
          <BarActions>
            <BarButton type="button" $kind="outline">
              Close preview
            </BarButton>
            <BarButton type="button" $kind="primary">
              Share preview
            </BarButton>
            <BarButton type="button" $kind="plain">
              Hide bar
            </BarButton>
          </BarActions>
        </PreviewBar>
      </BrowserWindow>
      <DockArea>
        <Vineyard />
        <Dock>
          {DOCK.map(({ name, Icon, running, badge }) =>
            Icon ? (
              <DockItem key={name}>
                <Icon />
                {running && <RunningDot />}
                {badge && <DockBadge>{badge}</DockBadge>}
              </DockItem>
            ) : (
              <DockDivider key={name} />
            )
          )}
        </Dock>
      </DockArea>
    </Desktop>
  );
};

export default App;
